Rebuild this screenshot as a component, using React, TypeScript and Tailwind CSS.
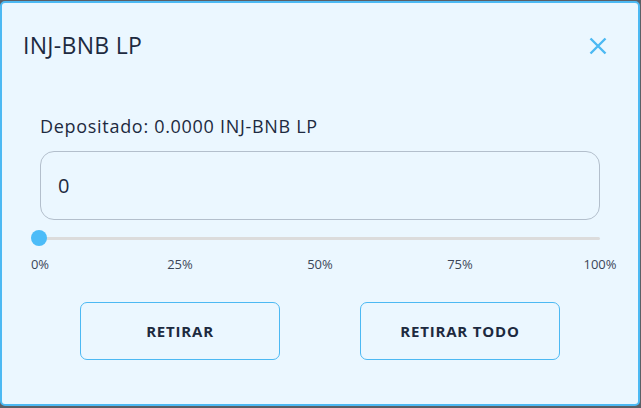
import React from "react";

export default function App() {
  const labels = ["0%", "25%", "50%", "75%", "100%"];
  return (
    <div className="w-[641px] h-[408px] bg-[#5b5f66] pt-px pr-px pb-[2px] flex" style={{ fontFamily: "'Open Sans', Lato, sans-serif" }}>
      <div className="flex-1 rounded-[5px] border-2 border-[#4cb9f3] bg-[#ebf7ff] flex flex-col">
        <div className="flex items-center justify-between pl-[21px] pr-[30px] pt-[28px]">
          <h1 className="text-[23px] leading-[28px] text-[#1d2a40] font-normal tracking-[0.3px]">INJ-BNB LP</h1>
          <svg width="20" height="20" viewBox="0 0 20 20" className="mt-[2px]">
            <path d="M2.5 2.5 L17.5 17.5 M17.5 2.5 L2.5 17.5" stroke="#4cb9f3" strokeWidth="2.4" strokeLinecap="butt" />
          </svg>
        </div>
        <div className="px-[38px] pt-[55px]">
          <div className="text-[18px] leading-[24px] text-[#1d2a40] tracking-[0.7px] whitespace-nowrap">Depositado: 0.0000 INJ-BNB LP</div>
          <div className="mt-[13px] h-[69px] rounded-[14px] border border-[#b3bfcc] flex items-center pl-[17px] text-[20px] text-[#1d2a40]">0</div>
          <div className="relative mt-[14px] h-[8px] flex items-center">
            <div className="w-full h-[3px] bg-[#dcdcdc] rounded" />
            <div className="absolute left-[-9px] top-[-4px] w-[16px] h-[16px] rounded-full bg-[#4cbcf8]" />
          </div>
          <div className="mt-[14px] flex justify-between text-[13px] leading-[16px] text-[#3b4658]">
            {labels.map((l) => (
              <div key={l} className="w-0 flex justify-center">
                <span className="whitespace-nowrap">{l}</span>
              </div>
            ))}
          </div>
          <div className="mt-[30px] flex justify-between px-[40px]">
            <button className="w-[200px] h-[58px] rounded-[7px] border border-[#4cb9f3] text-[15px] font-bold tracking-[0.8px] text-[#1d2a40]">RETIRAR</button>
            <button className="w-[200px] h-[58px] rounded-[7px] border border-[#4cb9f3] text-[15px] font-bold tracking-[0.8px] text-[#1d2a40]">RETIRAR TODO</button>
          </div>
        </div>
      </div>
    </div>
  );
}
